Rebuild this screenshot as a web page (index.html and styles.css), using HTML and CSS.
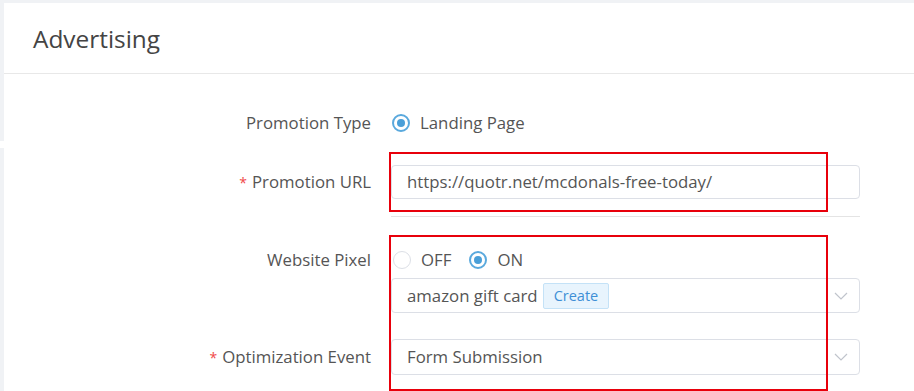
FILE: index.html
```html
<!DOCTYPE html>
<html>
<head>
    <meta charset="utf-8">
    <title>Advertising</title>
    <link rel="stylesheet" href="styles.css">
</head>
<body>

<!--upper part: header and promotion type-->
<div class="part part-a">
    <div class="card">
        <div class="card-head">Advertising</div>
        <div class="card-body body-a">
            <div class="row">
                <div class="label">Promotion Type</div>
                <div class="field">
                    <span class="radio on"></span>
                    <span class="radio-text">Landing Page</span>
                </div>
            </div>
        </div>
    </div>
</div>

<div class="seam"></div>

<!--lower part: url, pixel, event-->
<div class="part part-b">
    <div class="card body-b">
        <div class="row row-url">
            <div class="label"><span class="req">*</span>Promotion URL</div>
            <div class="field">
                <div class="input">https://quotr.net/mcdonals-free-today/</div>
            </div>
        </div>
        <div class="divider"></div>

        <div class="row row-pixel">
            <div class="label">Website Pixel</div>
            <div class="field">
                <div class="radios">
                    <span class="radio"></span>
                    <span class="radio-text">OFF</span>
                    <span class="radio on"></span>
                    <span class="radio-text">ON</span>
                </div>
                <div class="input select">
                    <span>amazon gift card</span>
                    <span class="tag">Create</span>
                    <svg class="arrow" width="14" height="8" viewBox="0 0 14 8"><polyline points="1,1 7,7 13,1" fill="none" stroke="#c0c4cc" stroke-width="1.2"/></svg>
                </div>
            </div>
        </div>

        <div class="row row-event">
            <div class="label"><span class="req">*</span>Optimization Event</div>
            <div class="field">
                <div class="input select">
                    <span>Form Submission</span>
                    <svg class="arrow" width="14" height="8" viewBox="0 0 14 8"><polyline points="1,1 7,7 13,1" fill="none" stroke="#c0c4cc" stroke-width="1.2"/></svg>
                </div>
            </div>
        </div>

        <!--annotation boxes-->
        <div class="mark mark-url"></div>
        <div class="mark mark-pixel"></div>
    </div>
</div>

</body>
</html>
```

FILE: styles.css
```css
*{ margin: 0; padding: 0; box-sizing: border-box; }
body{ background: #fff; font: 16.8px/22px "Open Sans", "Noto Sans", sans-serif; color: #555; }

.part{ background: #f0f2f5; padding-left: 4px; }
.part-a{ padding-top: 3px; height: 141px; }
.part-b{ height: 243px; }
.seam{ height: 7px; background: #fff; }

.card{ background: #fff; height: 100%; position: relative; }
.card-head{ height: 71px; border-bottom: 1px solid #e8e8e8; padding: 19px 0 0 29px; font-size: 24.4px; line-height: 34px; color: #444; }

.body-a{ padding-top: 33px; }
.body-b{ padding-top: 17px; }

/*form rows*/
.row{ display: flex; }
.label{ width: 387px; padding-right: 20px; text-align: right; color: #555; }
.field{ width: 469px; }
.req{ color: #f04848; margin-right: 5px; font-size: 14px; }

.body-a .row .label, .body-a .row .field{ line-height: 32px; }
.body-a .field{ display: flex; align-items: center; }

.row-url .label{ line-height: 34px; }
.input{ height: 34px; border: 1px solid #dcdfe6; border-radius: 4px; padding: 0 15px; line-height: 32px; color: #555; display: flex; align-items: center; position: relative; }
.select{ height: 35px; }

.divider{ margin: 16px 0 0 387px; width: 469px; height: 1px; background: #e4e4e4; }

.row-pixel{ margin-top: 27px; }
.row-pixel .label{ line-height: 32px; }
.radios{ height: 32px; display: flex; align-items: center; margin-bottom: 2px; }

.row-event{ margin-top: 26px; }
.row-event .label{ line-height: 36px; }
.row-event .select{ height: 36px; }

/*radio*/
.radio{ width: 18px; height: 18px; border: 1px solid #dcdfe6; border-radius: 50%; display: inline-block; margin: 0 10px 0 2px; position: relative; }
.radio.on{ border: 2px solid #5aa9dd; margin-left: 1px; }
.radio.on:after{ content: ""; position: absolute; left: 3px; top: 3px; width: 8px; height: 8px; border-radius: 50%; background: #4a9fd8; }
.radio-text{ margin-right: 17px; color: #555; }
.body-a .radio{ margin-left: 1px; }

.tag{ margin-left: 5px; height: 26px; line-height: 24px; padding: 0 10px; font-size: 14.5px; color: #3e8fd6; background: #e8f4fd; border: 1px solid #c4e2f7; border-radius: 2px; }
.arrow{ position: absolute; right: 11px; top: 13px; }

/*red marks over content*/
.mark{ position: absolute; border: 2px solid #e8000b; }
.mark-url{ left: 385px; top: 4px; width: 439px; height: 60px; }
.mark-pixel{ left: 385px; top: 87px; width: 439px; height: 156px; }
```
